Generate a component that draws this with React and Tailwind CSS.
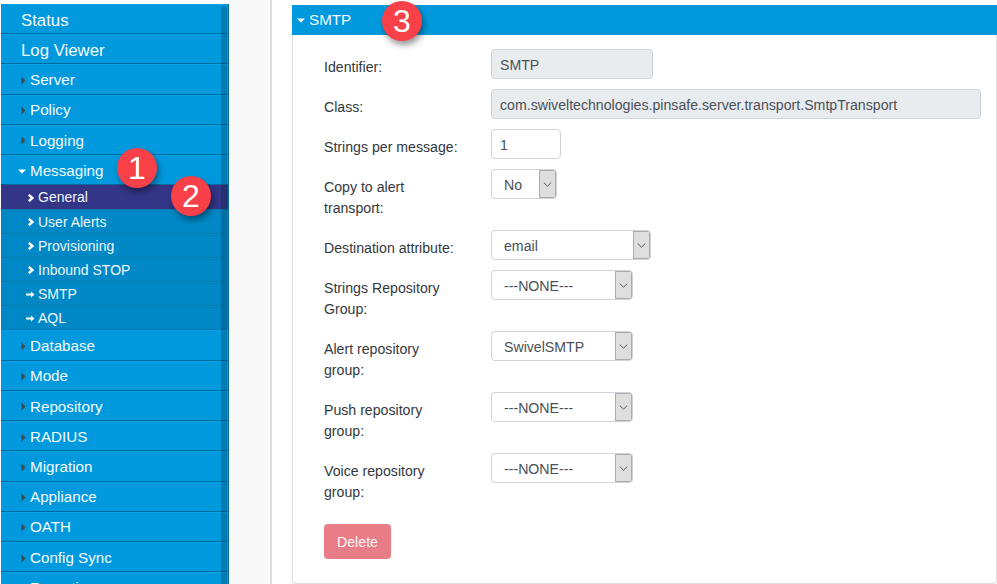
const topItems = ['Server', 'Policy', 'Logging'];
const bottomItems = ['Database', 'Mode', 'Repository', 'RADIUS', 'Migration', 'Appliance', 'OATH', 'Config Sync', 'Reporting'];
const subItems = [
  { label: 'General', icon: 'chevron', active: true },
  { label: 'User Alerts', icon: 'chevron' },
  { label: 'Provisioning', icon: 'chevron' },
  { label: 'Inbound STOP', icon: 'chevron' },
  { label: 'SMTP', icon: 'arrow' },
  { label: 'AQL', icon: 'arrow' },
];

function CaretRight() {
  return (
    <svg width="5" height="9" viewBox="0 0 5 9" className="mr-[4px] shrink-0">
      <path d="M0.5 0.5 L4.5 4.5 L0.5 8.5 Z" fill="#3f4a50" />
    </svg>
  );
}

function CaretDown() {
  return (
    <svg width="8" height="5" viewBox="0 0 8 5" className="shrink-0">
      <path d="M0 0.5 H8 L4 4.5 Z" fill="#ffffff" />
    </svg>
  );
}

function SubIcon({ type }) {
  if (type === 'arrow') {
    return (
      <svg width="9" height="7" viewBox="0 0 9 7" className="shrink-0">
        <path d="M0 2.5 H5 V0.5 L8.5 3.5 L5 6.5 V4.5 H0 Z" fill="#ffffff" />
      </svg>
    );
  }
  return (
    <svg width="6" height="8" viewBox="0 0 6 8" className="ml-[2px] mr-[1px] shrink-0">
      <path d="M0.8 0.8 L4.4 4 L0.8 7.2" fill="none" stroke="#ffffff" strokeWidth="2.4" />
    </svg>
  );
}

function NavRow({ children }) {
  return (
    <div className="flex h-[30.23px] items-center border-b border-b-[#00699c] border-t border-t-[#0aa3e6] pt-[2px] text-[15.2px] text-[#f4fbff]">
      {children}
    </div>
  );
}

function Sidebar() {
  return (
    <aside className="relative ml-px mt-1 h-[580px] w-[228px] shrink-0 overflow-hidden border-r border-r-[#00699c] bg-[#0099dd]">
      <NavRow><span className="pl-[20px] text-[16.8px]">Status</span></NavRow>
      <NavRow><span className="pl-[20px] text-[16.8px]">Log Viewer</span></NavRow>
      {topItems.map((item) => (
        <NavRow key={item}>
          <span className="flex items-center pl-[20px]"><CaretRight />{item}</span>
        </NavRow>
      ))}
      <NavRow>
        <span className="flex items-center gap-[4px] pl-[17px]"><CaretDown />Messaging</span>
      </NavRow>
      {subItems.map((item) => (
        <div
          key={item.label}
          className={`flex h-[24.2px] items-center gap-[3px] border-b border-b-[#0077ad] pl-[25px] pt-[2px] text-[14px] text-[#eef8fd] ${
            item.active ? 'bg-[#333587]' : 'bg-[#0088c6]'
          }`}
        >
          <SubIcon type={item.icon} />
          {item.label}
        </div>
      ))}
      {bottomItems.map((item) => (
        <NavRow key={item}>
          <span className="flex items-center pl-[20px]"><CaretRight />{item}</span>
        </NavRow>
      ))}
      <div className="absolute bottom-0 right-[1px] top-[2px] w-[6px] rounded-t-[3px] bg-[#00243a]/25" />
    </aside>
  );
}

function Field({ label, children }) {
  return (
    <div className="mb-[10px] flex items-start">
      <label className="w-[167px] shrink-0 pb-[1px] pr-[32px] pt-[8px] leading-[21px] text-[#33393e]">{label}</label>
      {children}
    </div>
  );
}

function ReadOnly({ value, className }) {
  return (
    <div className={`flex h-[30px] items-center rounded-[4px] border border-[#ced4da] bg-[#e9ecef] pl-[8px] pt-[3px] text-[#495057] ${className}`}>
      {value}
    </div>
  );
}

function Select({ value, className }) {
  return (
    <div className={`flex h-[30px] items-stretch overflow-hidden rounded-[4px] border border-[#ced4da] bg-white text-[#495057] ${className}`}>
      <span className="flex flex-1 items-center pl-[12px] pt-[3px]">{value}</span>
      <span className="flex w-[17px] items-center justify-center border border-[#ababab] bg-[#dedede]">
        <svg width="9" height="5" viewBox="0 0 9 5">
          <path d="M0.8 0.6 L4.5 4.2 L8.2 0.6" fill="none" stroke="#555555" strokeWidth="1" />
        </svg>
      </span>
    </div>
  );
}

function Badge({ n, className }) {
  return (
    <div className={`absolute flex h-[40px] w-[40px] items-center justify-center rounded-full bg-[#f74048] text-[32px] text-white shadow-[2px_4px_6px_rgba(0,0,0,0.4)] ${className}`}>
      {n}
    </div>
  );
}

export default function App() {
  return (
    <div className="relative flex h-[584px] w-[997px] overflow-hidden bg-white font-['Liberation_Sans',Arial,sans-serif] text-[14.15px]">
      <Sidebar />
      <div className="h-full w-[43px] shrink-0 border-r-2 border-r-[#dddddd] bg-[#f8f8f8]" />
      <div className="flex-1 pl-[20px] pt-[5px]">
        <section className="h-[579px] rounded-b-[4px] border border-t-0 border-[#dddddd] bg-white">
          <header className="-mx-px flex h-[30px] items-center gap-[4px] bg-[#0099dd] pl-[5px] text-[15.2px] text-[#f4fbff]">
            <CaretDown />
            SMTP
          </header>
          <div className="pl-[31px] pt-[14px]">
            <Field label="Identifier:"><ReadOnly value="SMTP" className="w-[162px]" /></Field>
            <Field label="Class:"><ReadOnly value="com.swiveltechnologies.pinsafe.server.transport.SmtpTransport" className="w-[490px]" /></Field>
            <Field label="Strings per message:">
              <div className="flex h-[30px] w-[70px] items-center rounded-[4px] border border-[#ced4da] bg-white pl-[8px] pt-[3px] text-[#495057]">1</div>
            </Field>
            <Field label="Copy to alert transport:"><Select value="No" className="w-[66px]" /></Field>
            <Field label="Destination attribute:"><Select value="email" className="w-[160px]" /></Field>
            <Field label="Strings Repository Group:"><Select value="---NONE---" className="w-[142px]" /></Field>
            <Field label="Alert repository group:"><Select value="SwivelSMTP" className="w-[142px]" /></Field>
            <Field label="Push repository group:"><Select value="---NONE---" className="w-[142px]" /></Field>
            <Field label="Voice repository group:"><Select value="---NONE---" className="w-[142px]" /></Field>
            <button className="mt-[10px] h-[35px] w-[67px] rounded-[4px] bg-[#e87d88] pt-[2px] text-[#fff5f6]">Delete</button>
          </div>
        </section>
      </div>
      <Badge n="1" className="left-[117px] top-[148px]" />
      <Badge n="2" className="left-[171px] top-[176px]" />
      <Badge n="3" className="left-[382px] top-[1px]" />
    </div>
  );
}
